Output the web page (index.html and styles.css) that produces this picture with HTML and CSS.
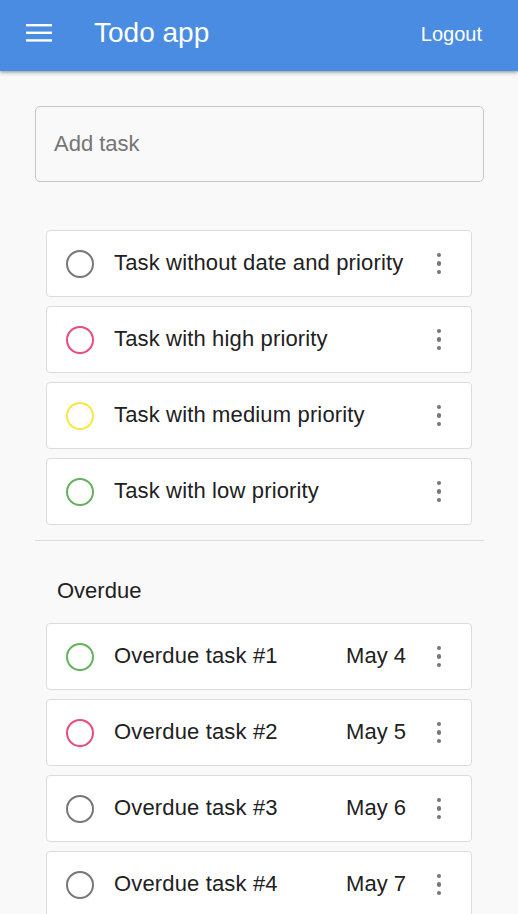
FILE: index.html
```html
<!DOCTYPE html>
<html>
<head>
<meta charset="utf-8">
<link rel="stylesheet" href="styles.css">
</head>
<body>
<header class="appbar">
  <button class="menu" aria-label="menu">
    <svg width="26" height="18" viewBox="0 0 26 18"><rect x="0" y="0" width="26" height="2.4" fill="#fff"/><rect x="0" y="7.6" width="26" height="2.4" fill="#fff"/><rect x="0" y="15.2" width="26" height="2.4" fill="#fff"/></svg>
  </button>
  <h1 class="title">Todo app</h1>
  <span class="logout">Logout</span>
</header>
<main class="content">
  <div class="add-task">Add task</div>
  <ul class="tasks">
    <li class="task"><span class="check gray"></span><span class="name">Task without date and priority</span><span class="kebab"><i></i><i></i><i></i></span></li>
    <li class="task"><span class="check pink"></span><span class="name">Task with high priority</span><span class="kebab"><i></i><i></i><i></i></span></li>
    <li class="task"><span class="check yellow"></span><span class="name">Task with medium priority</span><span class="kebab"><i></i><i></i><i></i></span></li>
    <li class="task"><span class="check green"></span><span class="name">Task with low priority</span><span class="kebab"><i></i><i></i><i></i></span></li>
  </ul>
  <hr class="divider">
  <h2 class="section">Overdue</h2>
  <ul class="tasks overdue">
    <li class="task"><span class="check green"></span><span class="name">Overdue task #1</span><span class="date">May 4</span><span class="kebab"><i></i><i></i><i></i></span></li>
    <li class="task"><span class="check pink"></span><span class="name">Overdue task #2</span><span class="date">May 5</span><span class="kebab"><i></i><i></i><i></i></span></li>
    <li class="task"><span class="check gray"></span><span class="name">Overdue task #3</span><span class="date">May 6</span><span class="kebab"><i></i><i></i><i></i></span></li>
    <li class="task"><span class="check gray"></span><span class="name">Overdue task #4</span><span class="date">May 7</span><span class="kebab"><i></i><i></i><i></i></span></li>
  </ul>
</main>
</body>
</html>
```
FILE: styles.css
```css
* { box-sizing: border-box; }
html, body { margin: 0; padding: 0; }
body {
  background: #f9f9f9;
  font-family: "Liberation Sans", Arial, Helvetica, sans-serif;
  color: #212121;
  overflow: hidden;
}
.appbar {
  height: 71px;
  background: #4a8ce2;
  display: flex;
  align-items: center;
  padding: 0 36px 6px 26px;
  color: #fff;
  box-shadow: 0 2px 4px rgba(0,0,0,0.25), 0 1px 2px rgba(0,0,0,0.15);
  position: relative;
}
.menu {
  border: 0;
  background: none;
  padding: 0;
  width: 26px;
  height: 18px;
  display: block;
}
.menu svg { display: block; }
.title {
  margin: 0 0 0 42px;
  font-size: 28px;
  font-weight: 400;
  flex: 1;
  line-height: 1;
}
.logout {
  font-size: 20px;
  line-height: 1;
  padding-top: 2px;
}
.content {
  padding: 35px 34px 0 35px;
}
.add-task {
  height: 76px;
  border: 1px solid #c6c6c6;
  border-radius: 5px;
  display: flex;
  align-items: center;
  padding-left: 18px;
  font-size: 22px;
  color: #757575;
  padding-bottom: 0;
}
.tasks {
  list-style: none;
  margin: 48px 12px 0 11px;
  padding: 0;
  display: flex;
  flex-direction: column;
  gap: 9px;
}
.task {
  height: 67px;
  background: #fff;
  border: 1px solid #dcdcdc;
  border-radius: 4px;
  display: flex;
  align-items: center;
  padding: 0 25px 0 19px;
}
.check {
  width: 28px;
  height: 28px;
  border-radius: 50%;
  border: 2.5px solid #777;
  flex: none;
}
.check.gray { border-color: #777; }
.check.pink { border-color: #e94d7c; }
.check.yellow { border-color: #f8e646; }
.check.green { border-color: #63b35e; }
.name {
  margin-left: 20px;
  font-size: 22px;
  letter-spacing: 0.15px;
  flex: 1;
  padding-bottom: 2px;
}
.date {
  font-size: 22px;
  padding-bottom: 2px;
  margin-right: 26px;
}
.kebab {
  display: flex;
  flex-direction: column;
  align-items: center;
  gap: 4px;
  width: 14px;
}
.kebab i {
  display: block;
  width: 4.5px;
  height: 4.5px;
  border-radius: 50%;
  background: #777;
}
.divider {
  border: 0;
  border-top: 1px solid #ddd;
  margin: 15px 0 0 0;
  height: 0;
}
.section {
  margin: 37px 0 0 22px;
  font-size: 22px;
  font-weight: 400;
  line-height: 26px;
}
.tasks.overdue { margin-top: 19px; }
```
